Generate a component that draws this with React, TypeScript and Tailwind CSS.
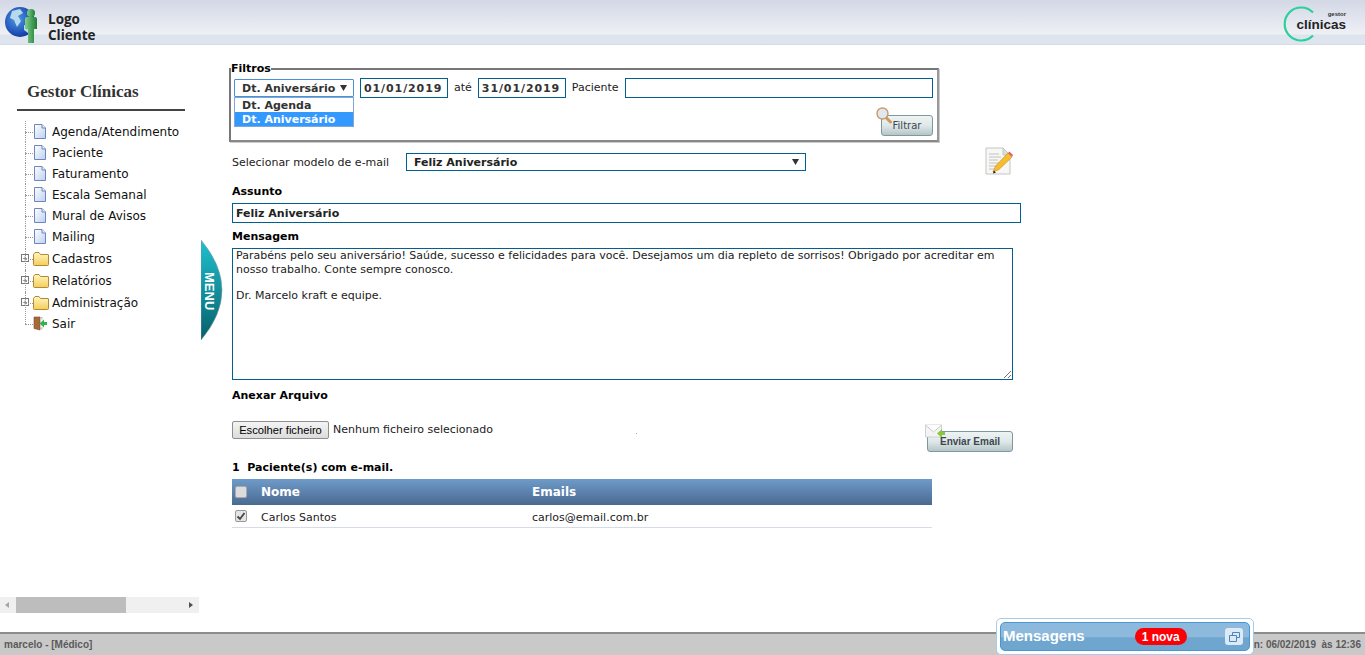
import { Plus } from "lucide-react";

const dejavu = "font-['DejaVu_Sans',Verdana,sans-serif]";
const fieldBorder = "border border-[#00608f]";

const pages = ["Agenda/Atendimento", "Paciente", "Faturamento", "Escala Semanal", "Mural de Avisos", "Mailing"];
const folders = ["Cadastros", "Relatórios", "Administração"];

function PageIcon() {
  return (
    <svg width="14" height="15" viewBox="0 0 14 15" className="shrink-0">
      <defs>
        <linearGradient id="pg" x1="0" y1="0" x2="1" y2="1">
          <stop offset="0" stopColor="#ffffff" />
          <stop offset="1" stopColor="#bcd0f2" />
        </linearGradient>
      </defs>
      <path d="M1.500.5h7.500l3.500 3.500v10.500h-11z" fill="url(#pg)" stroke="#6f86bd" />
      <path d="M9 .5v3.500h3.500" fill="#e9effa" stroke="#6f86bd" />
    </svg>
  );
}

function FolderIcon() {
  return (
    <svg width="16" height="14" viewBox="0 0 16 14" className="shrink-0">
      <defs>
        <linearGradient id="fd" x1="0" y1="0" x2="0" y2="1">
          <stop offset="0" stopColor="#fff6c0" />
          <stop offset="1" stopColor="#f5cd5a" />
        </linearGradient>
      </defs>
      <path d="M.5 2.500l1.500-2h4l1.500 2h7.500a.5.5 0 0 1 .5.5v9.500a1 1 0 0 1-1 1h-13a1 1 0 0 1-1-1z" fill="url(#fd)" stroke="#b08a35" />
    </svg>
  );
}

function ExitIcon() {
  return (
    <svg width="15" height="15" viewBox="0 0 15 15" className="shrink-0">
      <path d="M1 1h6v13l-6-1.500z" fill="#a9683c" stroke="#7d4a2a" strokeWidth=".6" />
      <path d="M7 1.500h2v2M7 13h2v-2" fill="none" stroke="#b9b9b9" />
      <path d="M14 6v3h-3v2.500l-4.500-4 4.500-4v2.500z" fill="#35b24a" />
    </svg>
  );
}

function TreeLine({ last }: { last?: boolean }) {
  return (
    <span className="relative h-full w-[8px] shrink-0">
      <span className={`absolute left-0 top-0 border-l border-dotted border-[#999] ${last ? "h-1/2" : "h-full"}`} />
      <span className="absolute left-0 top-1/2 w-[8px] border-t border-dotted border-[#999]" />
    </span>
  );
}

function Sidebar() {
  return (
    <aside className="flex w-[199px] shrink-0 flex-col">
      <div className="ml-[17px] mt-[35px] h-[31px] w-[168px] border-b-2 border-[#444] pl-[10px] font-['Liberation_Serif',serif] text-[17px] font-bold leading-[24px] text-[#333]">
        Gestor Clínicas
      </div>
      <ul className={`ml-[25px] mt-[10px] text-[12px] text-[#111] ${dejavu}`}>
        {pages.map((p) => (
          <li key={p} className="flex h-[21px] items-center">
            <TreeLine />
            <PageIcon />
            <span className="ml-[5px]">{p}</span>
          </li>
        ))}
        {folders.map((f, i) => (
          <li key={f} className={`relative flex h-[22px] items-center ${i === 0 ? "mt-px" : ""}`}>
            <span className="absolute left-[-4px] top-[6px] flex h-[8px] w-[8px] items-center justify-center border border-[#777] bg-white">
              <Plus size={7} strokeWidth={2} className="text-[#444]" />
            </span>
            <TreeLine />
            <FolderIcon />
            <span className="ml-[3px]">{f}</span>
          </li>
        ))}
        <li className="mt-[-1px] flex h-[21px] items-center">
          <TreeLine last />
          <ExitIcon />
          <span className="ml-[4px]">Sair</span>
        </li>
      </ul>
      <div className="mt-auto mb-[19px] flex h-[16px] w-[199px] items-center bg-[#f0f0f0]">
        <svg width="16" height="16" viewBox="0 0 16 16" className="shrink-0">
          <path d="M9 5v6l-4-3z" fill="#a6a6a6" />
        </svg>
        <div className="h-full w-[110px] bg-[#bdbdbd]" />
        <svg width="16" height="16" viewBox="0 0 16 16" className="ml-auto shrink-0">
          <path d="M6 5v6l4-3z" fill="#505050" />
        </svg>
      </div>
    </aside>
  );
}

function ActionButton({ label, className, children }: { label: string; className: string; children: React.ReactNode }) {
  return (
    <div className={`relative flex items-center justify-center rounded-[3px] border border-[#7f9a9e] bg-gradient-to-b from-[#eef3f3] via-[#dfe8e8] to-[#b4c6c8] text-[10px] text-[#3c4650] ${className}`}>
      {children}
      <span className="relative">{label}</span>
    </div>
  );
}

function Filtros() {
  return (
    <fieldset className="ml-[-3px] h-[80px] w-[710px] border-2 border-[#777] border-r-[#999] border-b-[#888] px-[3px] shadow-[1px_1px_0_#ccc]">
      <legend className="ml-[-3px] p-0 text-[11px] font-bold leading-[13px] text-black">Filtros</legend>
      <div className="relative mt-[3px] flex h-[20px] items-center text-[11px] text-[#222]">
        <div className="relative h-[18px] w-[120px] rounded-[1px] border border-[#4a90d9] bg-white pl-[7px] text-[11px] font-bold leading-[17px] text-[#333]">
          Dt. Aniversário
          <svg width="7" height="6" viewBox="0 0 7 6" className="absolute right-[6px] top-[5px]">
            <path d="M0 0h7l-3.500 6z" fill="#333" />
          </svg>
          <ul className="absolute left-[-1px] top-[17px] w-[120px] border border-[#7fa8d9] bg-white font-bold leading-[16px]">
            <li className="h-[14px] pl-[7px] text-[#333]">Dt. Agenda</li>
            <li className="h-[14px] bg-[#3399ff] pl-[7px] text-white">Dt. Aniversário</li>
          </ul>
        </div>
        <div className={`ml-[6px] h-[20px] w-[88px] ${fieldBorder} pl-[3px] font-bold leading-[20px] tracking-[0.9px] text-[#333]`}>01/01/2019</div>
        <span className="ml-[6px]">até</span>
        <div className={`ml-[6px] h-[20px] w-[88px] ${fieldBorder} pl-[3px] font-bold leading-[20px] tracking-[0.9px] text-[#333]`}>31/01/2019</div>
        <span className="ml-[6px] pt-px">Paciente</span>
        <div className={`ml-[6px] h-[20px] w-[308px] ${fieldBorder}`} />
      </div>
      <div className="mr-[1px] mt-[17px] flex justify-end">
        <ActionButton label="Filtrar" className="h-[21px] w-[52px] font-normal">
          <svg width="17" height="17" viewBox="0 0 17 17" className="absolute left-[-6px] top-[-9px]">
            <path d="M9.500 10l5 5" stroke="#c89a66" strokeWidth="3" strokeLinecap="round" />
            <circle cx="6.500" cy="6.500" r="5.500" fill="#dfe7f0" stroke="#c99b63" strokeWidth="1.400" />
          </svg>
        </ActionButton>
      </div>
    </fieldset>
  );
}

function NoteIcon() {
  return (
    <svg width="28" height="30" viewBox="0 0 28 30">
      <path d="M1 3h17l7 7v19h-24z" fill="#f7f7f5" stroke="#c5c5c5" />
      <path d="M18 3v7h7z" fill="#dcdcdc" stroke="#c5c5c5" />
      <path d="M4 9h10M4 12h12M4 15h9M4 18h11M4 21h8M4 24h6" stroke="#b5b5b5" strokeWidth=".8" />
      <path d="M8 27l2.500-6L23 8l4 4-13 12.500z" fill="#f6bd2e" stroke="#c98b17" strokeWidth=".6" />
      <path d="M23 8l1.500-1.500 3.500 3.500L27 12z" fill="#e2636b" />
      <path d="M8 28.500l.8-3 2.200 2z" fill="#222" />
    </svg>
  );
}

function MailIcon() {
  return (
    <svg width="21" height="17" viewBox="0 0 21 17" className="absolute left-[-3px] top-[-8px]">
      <path d="M.5 1h16v12H.5z" fill="#f4f4f4" stroke="#d0d0d0" />
      <path d="M.5 1l8 7 8-7" fill="#fff" stroke="#c8c8c8" />
      <path d="M20 8v3h-3v3l-5-4.500 5-4.500v3z" fill="#8cc63f" />
    </svg>
  );
}

function Formulario() {
  return (
    <main className={`flex min-w-0 flex-1 flex-col pl-[33px] pt-[17px] text-[11px] text-[#222] ${dejavu}`}>
      <Filtros />
      <div className="relative mt-[11px] flex h-[18px] w-[781px] items-center">
        <span className="w-[174px] pt-[2px]">Selecionar modelo de e-mail</span>
        <div className={`relative h-[18px] w-[400px] ${fieldBorder} pl-[7px] font-bold leading-[18px]`}>
          Feliz Aniversário
          <svg width="7" height="6" viewBox="0 0 7 6" className="absolute right-[6px] top-[5px]">
            <path d="M0 0h7l-3.500 6z" fill="#333" />
          </svg>
        </div>
        <span className="absolute left-[753px] top-[-8px]">
          <NoteIcon />
        </span>
      </div>

      <label className="mt-[14px] h-[14px] font-bold leading-[14px] text-black">Assunto</label>
      <div className={`mt-[4px] h-[20px] w-[789px] ${fieldBorder} pl-[3px] font-bold leading-[20px]`}>Feliz Aniversário</div>

      <label className="mt-[7px] h-[14px] font-bold leading-[14px] text-black">Mensagem</label>
      <div className={`relative mt-[4px] h-[132px] w-[781px] ${fieldBorder} px-[3px] leading-[13.500px]`}>
        <p>Parabéns pelo seu aniversário! Saúde, sucesso e felicidades para você. Desejamos um dia repleto de sorrisos! Obrigado por acreditar em nosso trabalho. Conte sempre conosco.</p>
        <p className="mt-[13px]">Dr. Marcelo kraft e equipe.</p>
        <svg width="9" height="9" viewBox="0 0 9 9" className="absolute bottom-0 right-0">
          <path d="M1 8l7-7M5 8l3-3" stroke="#777" />
        </svg>
      </div>

      <label className="mt-[9px] h-[14px] font-bold leading-[14px] text-black">Anexar Arquivo</label>
      <div className="relative mt-[18px] flex h-[18px] items-center">
        <div className="flex h-[18px] w-[97px] items-center justify-center rounded-[2px] border border-[#8f8f8f] bg-gradient-to-b from-[#f4f4f4] to-[#dcdcdc] font-['Liberation_Sans',Arial,sans-serif] text-[11.200px] text-black">
          Escolher ficheiro
        </div>
        <span className="ml-[4px]">Nenhum ficheiro selecionado</span>
        <span className="absolute left-[404px] top-[12px] h-px w-px bg-[#aaa]" />
        <div className="absolute left-[695px] top-[10px]">
          <ActionButton label="Enviar Email" className="h-[21px] w-[86px] font-['Liberation_Sans',Arial,sans-serif] font-bold">
            <MailIcon />
          </ActionButton>
        </div>
      </div>

      <p className="mt-[22px] h-[14px] font-bold leading-[14px] text-black">1&nbsp;&nbsp;Paciente(s) com e-mail.</p>
      <table className="mt-[4px] w-[700px] table-fixed border-collapse">
        <thead>
          <tr className="h-[26px] bg-gradient-to-b from-[#6f9bca] to-[#4a6a90] text-left text-[12px] font-bold text-white">
            <th className="w-[29px] pl-[3px]">
              <span className="block h-[12px] w-[12px] rounded-[2px] border border-[#aaa] bg-[#dcdcdc]" />
            </th>
            <th className="w-[271px] font-bold">Nome</th>
            <th className="font-bold">Emails</th>
          </tr>
        </thead>
        <tbody>
          <tr className="h-[22px] border-b border-[#d5dce8]">
            <td className="pl-[3px]">
              <span className="flex h-[12px] w-[12px] items-center justify-center rounded-[2px] border border-[#999] bg-[#e4e4e4]">
                <svg width="10" height="10" viewBox="0 0 10 10">
                  <path d="M1.500 5.500l2.500 2.500 4.500-6" fill="none" stroke="#444" strokeWidth="1.800" />
                </svg>
              </span>
            </td>
            <td className="pt-[5px]">Carlos Santos</td>
            <td className="pt-[5px]">carlos@email.com.br</td>
          </tr>
        </tbody>
      </table>
    </main>
  );
}

export default function App() {
  return (
    <div className="relative flex h-[655px] w-full flex-col overflow-hidden bg-white">
      <header className="relative flex h-[45px] shrink-0 items-start justify-between border-b border-[#d5dce6] bg-[linear-gradient(#d3d8e6_0px,#eef0f5_34px,#dde4ee_35px,#dfe5ee_44px)]">
        <div className="flex items-start">
          <svg width="44" height="38" viewBox="0 0 44 38" className="ml-[4px] mt-[7px]">
            <defs>
              <radialGradient id="gl" cx=".4" cy=".4" r=".7">
                <stop offset="0" stopColor="#4f9ae8" />
                <stop offset="1" stopColor="#0a2f9c" />
              </radialGradient>
              <linearGradient id="pr" x1="0" y1="0" x2="1" y2="0">
                <stop offset="0" stopColor="#7fd08a" />
                <stop offset="1" stopColor="#1d7d34" />
              </linearGradient>
            </defs>
            <circle cx="16" cy="15" r="15" fill="url(#gl)" />
            <path d="M8 4l8-2 3 4-5 3 3 5-4 6-3-7-4-2zM20 18l6 2-2 6-4-3z" fill="#b6d9ee" />
            <circle cx="27" cy="6" r="4" fill="url(#pr)" />
            <path d="M21 12q0-2 2-2h8q2 0 2 2v10h-3v14h-6V22h-3z" fill="url(#pr)" />
          </svg>
          <div className="mt-[11px] font-['Open_Sans',sans-serif] text-[13.500px] font-bold leading-[16px] text-[#222]">
            Logo
            <br />
            Cliente
          </div>
        </div>
        <div className="relative mr-[19px] mt-[6px] h-[36px] w-[63px]">
          <svg width="36" height="36" viewBox="0 0 36 36" className="absolute left-0 top-0">
            <path d="M30 6.500A16.500 16.500 0 1 0 30 29.500" fill="none" stroke="#2bd09a" strokeWidth="2.200" />
          </svg>
          <span className="absolute right-0 top-[4px] font-['Liberation_Sans',sans-serif] text-[6px] font-bold leading-[8px] text-[#333]">gestor</span>
          <span className="absolute right-0 top-[10px] font-['Liberation_Sans',sans-serif] text-[13.500px] font-bold leading-[17px] text-[#222]">clínicas</span>
        </div>
      </header>

      <div className="flex min-h-0 flex-1">
        <Sidebar />
        <Formulario />
      </div>

      <footer className="flex h-[23px] shrink-0 items-center justify-between border-t-2 border-[#8c8c8c] bg-[#c9c9c9] px-[4px] font-['Liberation_Sans',Arial,sans-serif] text-[10px] font-bold text-[#5a5a5a]">
        <span>marcelo - [Médico]</span>
        <span>n: 06/02/2019&nbsp; às 12:36</span>
      </footer>

      {/* aba do menu lateral */}
      <div className="absolute left-[201px] top-[240px] h-[100px] w-[22px]">
        <svg width="22" height="100" viewBox="0 0 22 100" className="absolute inset-0">
          <defs>
            <linearGradient id="tab" x1="0" y1="0" x2="0" y2="1">
              <stop offset="0" stopColor="#1fc0d0" />
              <stop offset="1" stopColor="#05606a" />
            </linearGradient>
          </defs>
          <path d="M0 0Q42 50 0 100Z" fill="url(#tab)" stroke="#7a9a9e" strokeWidth=".6" />
        </svg>
        <span className="absolute left-0 top-[32px] font-['Liberation_Sans',sans-serif] text-[13px] font-bold leading-[16px] text-white [writing-mode:vertical-rl]">MENU</span>
      </div>

      {/* janela de mensagens */}
      <div className="absolute left-[996px] top-[618px] h-[37px] w-[258px] rounded-[5px] border border-[#a5cde8] bg-white p-[3px]">
        <div className="flex h-full items-center rounded-[5px] border border-[#4a96d2] bg-[linear-gradient(#8db9dc_0%,#8db9dc_50%,#6ea6d0_55%,#6ea6d0_100%)] pl-[2px] pr-[6px] font-['Liberation_Sans',Arial,sans-serif] text-white">
          <span className="text-[15px] font-bold">Mensagens</span>
          <span className="ml-[50px] flex h-[17px] w-[52px] items-center justify-center rounded-full bg-[#fb0007] text-[12px] font-bold">1 nova</span>
          <span className="ml-auto flex h-[17px] w-[18px] items-center justify-center rounded-[3px] bg-[#dceaf6]">
            <svg width="11" height="10" viewBox="0 0 11 10">
              <path d="M3.500 3V.5h7v5H8" fill="none" stroke="#4a86c0" />
              <path d="M.5 3.500h7v6h-7z" fill="none" stroke="#4a86c0" />
            </svg>
          </span>
        </div>
      </div>
    </div>
  );
}
